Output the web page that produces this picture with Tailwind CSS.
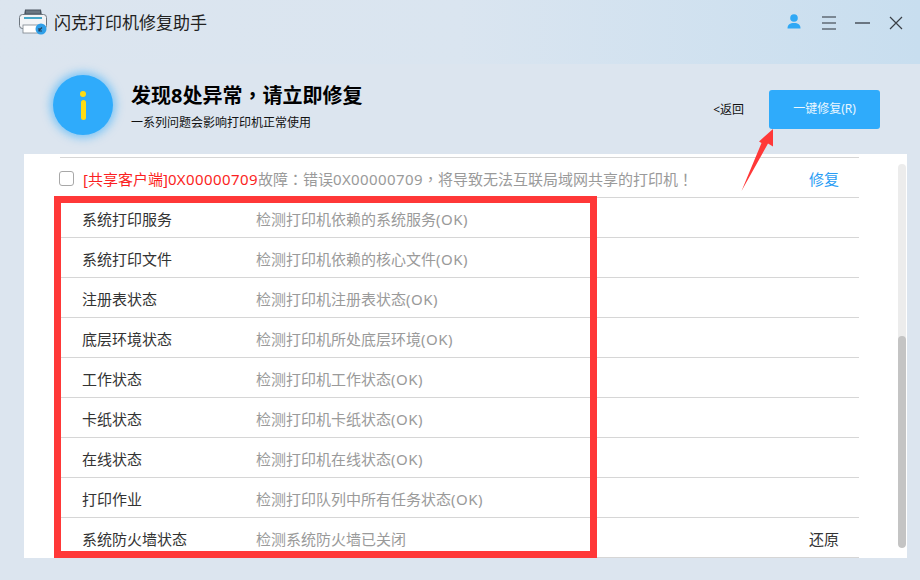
<!DOCTYPE html>
<html lang="zh">
<head>
<meta charset="utf-8">
<script src="https://cdn.jsdelivr.net/npm/@tailwindcss/browser@4"></script>
</head>
<body class="m-0">
<div class="relative w-[920px] h-[580px] overflow-hidden bg-[#dce5ef] font-['Noto_Sans','Noto_Sans_CJK_SC',sans-serif] flex flex-col">
  <!-- title bar -->
  <div class="h-16 shrink-0 flex items-center pl-[19px] pr-[17px] pb-[16px] bg-gradient-to-r from-[#dce5ef] via-[#dae5f0] to-[#c8deef]">
    <svg class="w-[28px] h-[26px] -mt-[4px]" viewBox="0 0 28 26">
      <path d="M6 0.500h16l1 6H5z" fill="#4a5560"/>
      <rect x="7" y="1.500" width="14" height="3" fill="#6b7782"/>
      <rect x="0.500" y="5.500" width="27" height="14" rx="3" fill="#f2f4f6" stroke="#6e7780"/>
      <rect x="5" y="8" width="18" height="2" fill="#47a7c9"/>
      <rect x="4" y="16" width="19" height="8" fill="#ffffff" stroke="#7b838b" stroke-width="0.8"/>
      <circle cx="22" cy="20" r="5.500" fill="#2f9fe8"/>
      <path d="M20 21.500l3-3M20 19v3h3" stroke="#26425c" stroke-width="1.200" fill="none"/>
    </svg>
    <span class="ml-[7px] text-[17px] leading-none text-[#222] -mt-[3px]">闪克打印机修复助手</span>
    <div class="ml-auto flex items-center -mt-[3px]">
      <svg class="w-[14px] h-[15px] mr-[21px] -mt-[2px]" viewBox="0 0 14 15"><circle cx="7" cy="4" r="3.800" fill="#2fa8f5"/><path d="M0.500 14.500c0-4 2.500-5.500 6.500-5.500s6.500 1.500 6.500 5.500z" fill="#2fa8f5"/></svg>
      <svg class="w-[14px] h-[14px] mr-[19px]" viewBox="0 0 14 14"><path d="M0 1h14M0 7h14M0 13h14" stroke="#2b3038" stroke-width="1.100"/></svg>
      <svg class="w-[15px] h-[14px] mr-[19px]" viewBox="0 0 15 14"><path d="M0 7h15" stroke="#2b3038" stroke-width="1.200"/></svg>
      <svg class="w-[14px] h-[14px]" viewBox="0 0 14 14"><path d="M1 1l12 12M13 1L1 13" stroke="#3a3f46" stroke-width="1.200"/></svg>
    </div>
  </div>
  <!-- header -->
  <div class="h-[90px] shrink-0 flex items-center pl-[53px] pr-[40px]">
    <div class="w-[60px] h-[60px] rounded-full bg-[#2fabfb] shadow-[0_0_8px_3px_rgba(47,171,251,0.55)] flex flex-col items-center -mt-[8px]">
      <div class="w-[6px] h-[6px] rounded-full bg-[#ffdc14] mt-[16px]"></div>
      <div class="w-[5px] h-[20px] rounded-full bg-[#ffdc14] mt-[3px]"></div>
    </div>
    <div class="ml-[18px] flex flex-col -mt-[5px]">
      <div class="text-[20px] leading-[28px] font-bold text-black">发现8处异常<span lang="zh-TW" class="font-['Noto_Sans_CJK_TC']">，</span>请立即修复</div>
      <div class="text-[12px] leading-[18px] mt-[4px] text-[#111]">一系列问题会影响打印机正常使用</div>
    </div>
    <div class="ml-auto flex items-center">
      <span class="text-[12px] text-[#111] mr-[25px] mt-[1px]">&lt;返回</span>
      <div class="w-[111px] h-[39px] rounded-[3px] bg-[#2fabfb] text-white/90 text-[12px] flex items-center justify-center">一键修复(R)</div>
    </div>
  </div>
  <!-- panel -->
  <div class="relative ml-[24px] w-[883px] h-[404px] bg-white">
    <div class="ml-[36px] w-[799px] pt-[3px] text-[15px]">
      <div class="h-[41px] border-y border-[#d6d6d6] flex items-center pt-[3px]">
        <span class="w-[15px] h-[15px] ml-[-1px] -mt-[2px] border border-[#a8a8a8] rounded-[3px] bg-white shrink-0"></span>
        <span class="ml-[9px] text-[#fb1f23] whitespace-nowrap">[共享客户端]<span class="tracking-[0.4px]">0X00000709</span></span><span class="text-[#9a9a9a] whitespace-nowrap">故障<span lang="zh-TW" class="font-['Noto_Sans_CJK_TC']">：</span>错误<span class="tracking-[0.4px]">0X00000709</span><span lang="zh-TW" class="font-['Noto_Sans_CJK_TC']">，</span>将导致无法互联局域网共享的打印机<span lang="zh-TW" class="font-['Noto_Sans_CJK_TC']">！</span></span>
        <span class="ml-auto mr-[20px] text-[#2a9df4]">修复</span>
      </div>
      <div class="h-10 border-b border-[#d6d6d6] flex items-center pt-[3px]"><span class="w-[196px] pl-[22px] text-[#333] shrink-0">系统打印服务</span><span class="text-[#9a9a9a]">检测打印机依赖的系统服务<span class="tracking-[0.5px]">(OK)</span></span></div>
      <div class="h-10 border-b border-[#d6d6d6] flex items-center pt-[3px]"><span class="w-[196px] pl-[22px] text-[#333] shrink-0">系统打印文件</span><span class="text-[#9a9a9a]">检测打印机依赖的核心文件<span class="tracking-[0.5px]">(OK)</span></span></div>
      <div class="h-10 border-b border-[#d6d6d6] flex items-center pt-[3px]"><span class="w-[196px] pl-[22px] text-[#333] shrink-0">注册表状态</span><span class="text-[#9a9a9a]">检测打印机注册表状态<span class="tracking-[0.5px]">(OK)</span></span></div>
      <div class="h-10 border-b border-[#d6d6d6] flex items-center pt-[3px]"><span class="w-[196px] pl-[22px] text-[#333] shrink-0">底层环境状态</span><span class="text-[#9a9a9a]">检测打印机所处底层环境<span class="tracking-[0.5px]">(OK)</span></span></div>
      <div class="h-10 border-b border-[#d6d6d6] flex items-center pt-[3px]"><span class="w-[196px] pl-[22px] text-[#333] shrink-0">工作状态</span><span class="text-[#9a9a9a]">检测打印机工作状态<span class="tracking-[0.5px]">(OK)</span></span></div>
      <div class="h-10 border-b border-[#d6d6d6] flex items-center pt-[3px]"><span class="w-[196px] pl-[22px] text-[#333] shrink-0">卡纸状态</span><span class="text-[#9a9a9a]">检测打印机卡纸状态<span class="tracking-[0.5px]">(OK)</span></span></div>
      <div class="h-10 border-b border-[#d6d6d6] flex items-center pt-[3px]"><span class="w-[196px] pl-[22px] text-[#333] shrink-0">在线状态</span><span class="text-[#9a9a9a]">检测打印机在线状态<span class="tracking-[0.5px]">(OK)</span></span></div>
      <div class="h-10 border-b border-[#d6d6d6] flex items-center pt-[3px]"><span class="w-[196px] pl-[22px] text-[#333] shrink-0">打印作业</span><span class="text-[#9a9a9a]">检测打印队列中所有任务状态<span class="tracking-[0.5px]">(OK)</span></span></div>
      <div class="h-10 border-b border-[#d6d6d6] flex items-center pt-[3px]"><span class="w-[196px] pl-[22px] text-[#333] shrink-0">系统防火墙状态</span><span class="text-[#9a9a9a]">检测系统防火墙已关闭</span><span class="ml-auto mr-[20px] text-[#333]">还原</span></div>
    </div>
    <!-- scrollbar -->
    <div class="absolute left-[874px] top-[10px] w-[8px] h-[384px] rounded-full bg-[#ececec] overflow-hidden">
      <div class="absolute left-0 top-[172px] w-[8px] h-[212px] rounded-full bg-[#c4c4c4]"></div>
    </div>
  </div>
  <!-- annotation: red box -->
  <div class="absolute left-[54px] top-[196px] w-[543px] h-[362px] border-[7px] border-[#ff3838]"></div>
  <!-- annotation: arrow -->
  <svg class="absolute left-[738px] top-[126px]" width="40" height="68" viewBox="0 0 40 68">
    <path d="M3.500 65 L23.500 17 L21 15.500 L35 3 L35 20.500 L30 17.500 Z" fill="#ff3838"/>
  </svg>
</div>
</body>
</html>
